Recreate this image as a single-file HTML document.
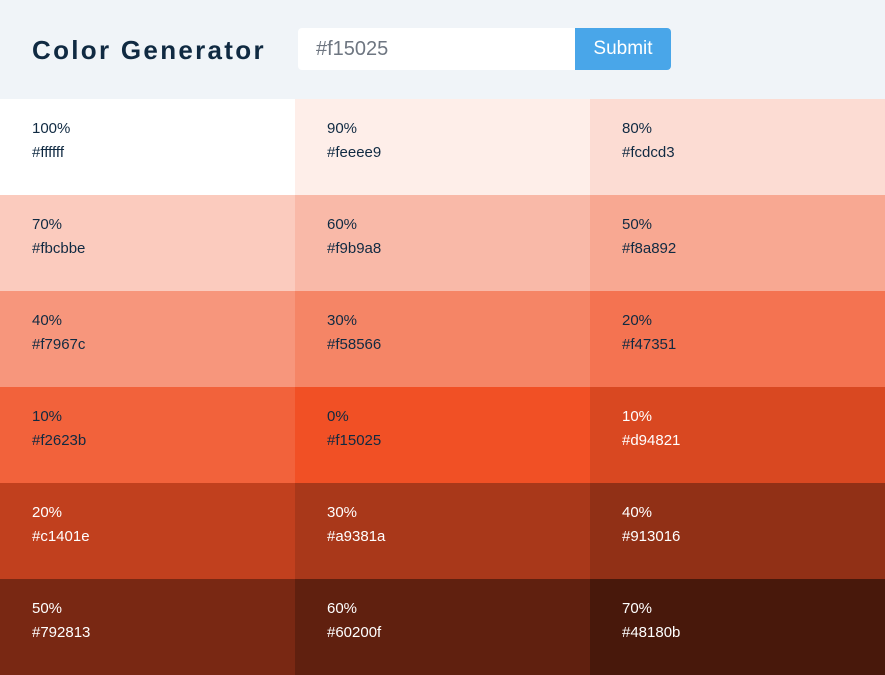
<!DOCTYPE html>
<html><head><style>
*{margin:0;padding:0;box-sizing:border-box}
body{width:885px;height:613px;overflow:hidden;font-family:"Liberation Sans",sans-serif;background:#fff}
header{height:99px;background:#f0f4f8;position:relative}
h1{position:absolute;left:32px;top:33px;font-size:26px;font-weight:bold;letter-spacing:2.3px;color:#102a42;line-height:34px}
.inp{position:absolute;left:298px;top:28px;width:277px;height:42px;background:#fff;border-radius:4px 0 0 4px;font-size:20px;color:#6e7681;padding:10px 0 0 18px}
.btn{position:absolute;left:575px;top:28px;width:96px;height:42px;background:#49a6e9;border-radius:0 4px 4px 0;color:#fff;font-size:19px;text-align:center;line-height:42px}
.grid{display:grid;grid-template-columns:295px 295px 295px}
.c{height:96px;padding:18px 0 0 32px;font-size:15px;line-height:24px;color:#102a42}
.w{color:#fff}
</style></head><body>
<header><h1>Color Generator</h1><div class="inp">#f15025</div><div class="btn">Submit</div></header>
<div class="grid">
<div class="c" style="background:#ffffff">100%<br>#ffffff</div>
<div class="c" style="background:#feeee9">90%<br>#feeee9</div>
<div class="c" style="background:#fcdcd3">80%<br>#fcdcd3</div>
<div class="c" style="background:#fbcbbe">70%<br>#fbcbbe</div>
<div class="c" style="background:#f9b9a8">60%<br>#f9b9a8</div>
<div class="c" style="background:#f8a892">50%<br>#f8a892</div>
<div class="c" style="background:#f7967c">40%<br>#f7967c</div>
<div class="c" style="background:#f58566">30%<br>#f58566</div>
<div class="c" style="background:#f47351">20%<br>#f47351</div>
<div class="c" style="background:#f2623b">10%<br>#f2623b</div>
<div class="c" style="background:#f15025">0%<br>#f15025</div>
<div class="c w" style="background:#d94821">10%<br>#d94821</div>
<div class="c w" style="background:#c1401e">20%<br>#c1401e</div>
<div class="c w" style="background:#a9381a">30%<br>#a9381a</div>
<div class="c w" style="background:#913016">40%<br>#913016</div>
<div class="c w" style="background:#792813">50%<br>#792813</div>
<div class="c w" style="background:#60200f">60%<br>#60200f</div>
<div class="c w" style="background:#48180b">70%<br>#48180b</div>
</div>
</body></html>
